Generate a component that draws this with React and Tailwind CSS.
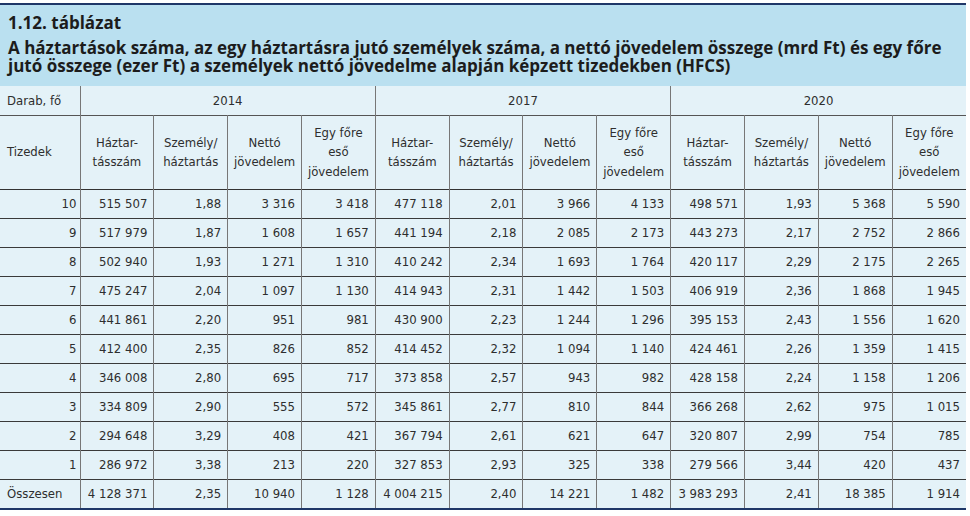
import React from "react";

const rows = [
  ["10", "515 507", "1,88", "3 316", "3 418", "477 118", "2,01", "3 966", "4 133", "498 571", "1,93", "5 368", "5 590"],
  ["9", "517 979", "1,87", "1 608", "1 657", "441 194", "2,18", "2 085", "2 173", "443 273", "2,17", "2 752", "2 866"],
  ["8", "502 940", "1,93", "1 271", "1 310", "410 242", "2,34", "1 693", "1 764", "420 117", "2,29", "2 175", "2 265"],
  ["7", "475 247", "2,04", "1 097", "1 130", "414 943", "2,31", "1 442", "1 503", "406 919", "2,36", "1 868", "1 945"],
  ["6", "441 861", "2,20", "951", "981", "430 900", "2,23", "1 244", "1 296", "395 153", "2,43", "1 556", "1 620"],
  ["5", "412 400", "2,35", "826", "852", "414 452", "2,32", "1 094", "1 140", "424 461", "2,26", "1 359", "1 415"],
  ["4", "346 008", "2,80", "695", "717", "373 858", "2,57", "943", "982", "428 158", "2,24", "1 158", "1 206"],
  ["3", "334 809", "2,90", "555", "572", "345 861", "2,77", "810", "844", "366 268", "2,62", "975", "1 015"],
  ["2", "294 648", "3,29", "408", "421", "367 794", "2,61", "621", "647", "320 807", "2,99", "754", "785"],
  ["1", "286 972", "3,38", "213", "220", "327 853", "2,93", "325", "338", "279 566", "3,44", "420", "437"],
];
const total = ["Összesen", "4 128 371", "2,35", "10 940", "1 128", "4 004 215", "2,40", "14 221", "1 482", "3 983 293", "2,41", "18 385", "1 914"];

const years = ["2014", "2017", "2020"];

function SubHeads() {
  const cells = [];
  years.forEach((y) => {
    cells.push(
      <th key={y + "a"} className="border-l border-[#777] font-normal align-middle text-center">
        Háztar-<br />tásszám
      </th>,
      <th key={y + "b"} className="border-l border-[#777] font-normal align-middle text-center">
        Személy/<br />háztartás
      </th>,
      <th key={y + "c"} className="border-l border-[#777] font-normal align-middle text-center">
        Nettó<br />jövedelem
      </th>,
      <th key={y + "d"} className="border-l border-[#777] font-normal align-middle text-center">
        Egy főre<br />eső<br />jövedelem
      </th>
    );
  });
  return cells;
}

function Row({ r, first }) {
  return (
    <tr className={first ? "h-[30px] border-t border-[#3a3a3a]" : "h-[29px] border-t border-[#3a3a3a]"}>
      <td className={first ? "text-left pl-[7px] border-r border-[#777]" : "text-right pr-[3px] border-r border-[#777]"}>{r[0]}</td>
      {r.slice(1).map((v, i) => (
        <td key={i} className="text-right pr-[6px] border-l border-[#777] whitespace-nowrap">
          {v}
        </td>
      ))}
    </tr>
  );
}

export default function App() {
  return (
    <div className="w-[966px] pt-[3px] bg-white">
      <div
        className="border-t-2 border-[#1f3768] bg-[#bae0f0] px-[8px] pt-[9px] pb-[11px] font-bold text-[#1c1c1c]"
        style={{ fontFamily: '"Open Sans", "Noto Sans", sans-serif' }}
      >
        <div className="text-[17px] leading-[18px]">1.12. táblázat</div>
        <div className="mt-[7px] text-[17px] leading-[18px]">
          A háztartások száma, az egy háztartásra jutó személyek száma, a nettó jövedelem összege (mrd Ft) és egy főre
          <br />
          jutó összege (ezer Ft) a személyek nettó jövedelme alapján képzett tizedekben (HFCS)
        </div>
      </div>
      <table
        className="w-[966px] table-fixed border-collapse bg-[#e4f2f8] text-[13px] leading-[19.5px] text-[#2e2e2e] border-b-2 border-b-[#1f3768]"
        style={{ fontFamily: '"DejaVu Sans Condensed", "DejaVu Sans", sans-serif' }}
      >
        <colgroup>
          <col className="w-[80px]" />
          {Array.from({ length: 12 }).map((_, i) => (
            <col key={i} />
          ))}
        </colgroup>
        <thead>
          <tr className="h-[29px] border-b border-[#555]">
            <th className="text-left pl-[7px] font-normal border-r border-[#777]">Darab, fő</th>
            {years.map((y) => (
              <th key={y} colSpan={4} className="font-normal text-center border-l border-[#777]">
                {y}
              </th>
            ))}
          </tr>
          <tr className="h-[74px] border-b border-[#333]">
            <th className="text-left pl-[7px] font-normal border-r border-[#777]">Tizedek</th>
            <SubHeads />
          </tr>
        </thead>
        <tbody>
          {rows.map((r, i) => (
            <Row key={i} r={r} />
          ))}
          <Row r={total} first />
        </tbody>
      </table>
    </div>
  );
}
